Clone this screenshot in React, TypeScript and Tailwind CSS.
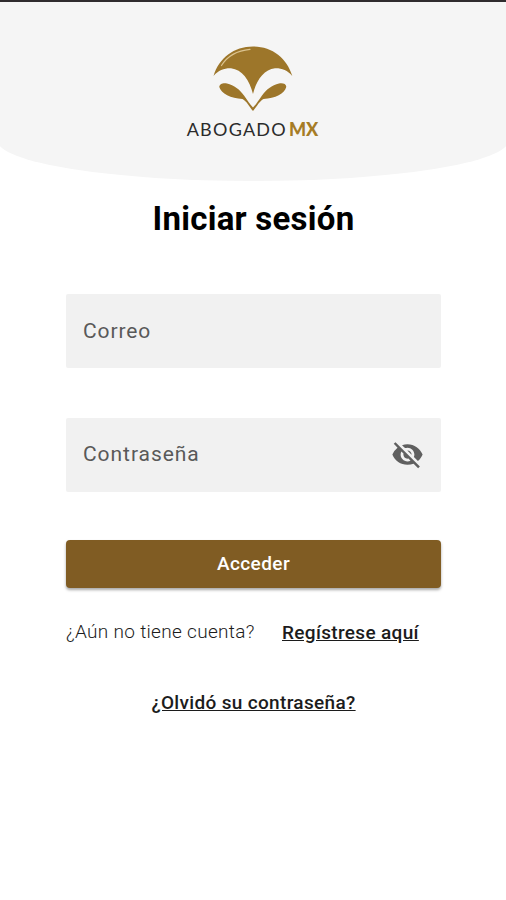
import { MdVisibilityOff } from 'react-icons/md'

function Logo() {
  return (
    <div className="flex flex-col items-center">
      <svg width="80" height="66" viewBox="0 0 80 66" fill="#9d762a">
        {/* cap */}
        <path d="M0.5 30C6 12 21 0.5 40 0.5S74 12 79.3 30C74.5 24 68 22 62 22.3C51 23.5 43.5 34 40 48C36.5 34 29 23.5 18 22.3C12 22 5.5 24 0.5 30Z" />
        {/* leaves */}
        <path d="M6.3 41C6.3 38 10 36.6 14 37.4C21 39 27 43.5 31 49.5C34.5 54.5 37 58.5 40 61.5C43 58.5 45.5 54.5 49 49.5C53 43.5 59 39 66 37.4C70 36.6 73.7 38 73.2 41C72 47.5 62 52.5 50.5 53C46.5 55 43.5 61 40 65C36.5 61 33.5 55 29.5 53C18 52.5 8 47.5 6.3 41Z" />
        {/* highlight */}
        <path d="M8.5 19.5C14 10.5 24 4.5 37 3.3" fill="none" stroke="#dcc490" strokeWidth="1.2" strokeLinecap="round" />
      </svg>
      <p className="mt-[7px] -ml-px flex font-['Lato'] text-[18px] leading-[20px]">
        <span className="tracking-[1.25px] text-[#2b2b2b]">ABOGADO</span>
        <span className="ml-0.5 font-black text-[#a67c25]">MX</span>
      </p>
    </div>
  )
}

export default function App() {
  return (
    <main className="min-h-[900px] overflow-hidden bg-white font-['Roboto',sans-serif] text-[#1c1c1c]">
      <header className="-mx-[3px] flex h-[181px] justify-center rounded-b-[50%_41px] border-t-2 border-[#2f2c2e] bg-[#f5f5f5] pt-[44px]">
        <Logo />
      </header>

      <h1 className="mt-[18px] ml-px text-center text-[33px] leading-[40px] font-bold tracking-[0.25px] text-black">Iniciar sesión</h1>

      <form className="mt-[55px] mr-[65px] ml-[66px]">
        <label className="flex h-[74px] items-center rounded-[2px] bg-[#f1f1f1] px-[17px] pt-px text-[21px] tracking-[0.9px] text-[#595959]">
          <span>Correo</span>
        </label>

        <label className="mt-[50px] flex h-[74px] items-center justify-between rounded-[2px] bg-[#f1f1f1] px-[17px] text-[21px] tracking-[0.95px] text-[#595959]">
          <span>Contraseña</span>
          <MdVisibilityOff size={33} color="#5f5f5f" className="-mt-[2px]" />
        </label>

        <button
          type="button"
          className="mt-[48px] h-[48px] w-full rounded-[4px] bg-[#805c23] text-[19px] font-medium tracking-[0.4px] text-white shadow-[0_2px_3px_rgba(0,0,0,0.35)]"
        >
          Acceder
        </button>
      </form>

      <div className="mx-[66px] mt-[32px] flex items-start leading-[24px]">
        <p className="w-[216px] text-[19px] font-light tracking-[0.3px] whitespace-nowrap">¿Aún no tiene cuenta?</p>
        <a className="mt-px text-[19px] font-medium tracking-[0.33px] whitespace-nowrap underline">Regístrese aquí</a>
      </div>

      <p className="mt-[46px] ml-px text-center text-[19px] leading-[24px] font-medium tracking-[0.33px]">
        <a className="underline">¿Olvidó su contraseña?</a>
      </p>
    </main>
  )
}
